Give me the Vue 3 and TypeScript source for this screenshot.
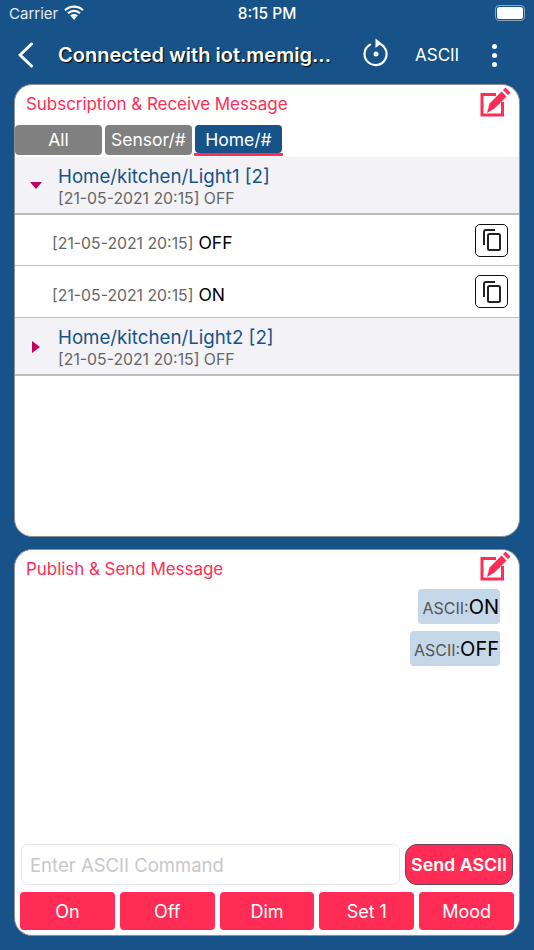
<script setup lang="ts">
interface Message {
  time: string
  value: string
}

const tabs = ['All', 'Sensor/#', 'Home/#']
const messages: Message[] = [
  { time: '[21-05-2021 20:15]', value: 'OFF' },
  { time: '[21-05-2021 20:15]', value: 'ON' },
]
const sent = ['ON', 'OFF']
const quick = ['On', 'Off', 'Dim', 'Set 1', 'Mood']
</script>

<template>
  <div class="screen">
    <div class="status">
      <div class="status-left">
        <span>Carrier</span>
        <svg width="20" height="15" viewBox="0 0 20 15">
          <path d="M1 5.200a13 13 0 0 1 18 0M4 8.300a8.800 8.800 0 0 1 12 0M6.900 11.200a4.600 4.600 0 0 1 6.200 0" fill="none" stroke="#fff" stroke-width="2.200" />
          <path d="M10 15l-2.400-2.700a3.400 3.400 0 0 1 4.800 0z" fill="#fff" />
        </svg>
      </div>
      <span class="clock">8:15 PM</span>
      <div class="battery"><i></i></div>
    </div>

    <nav class="navbar">
      <svg class="back" width="17" height="26" viewBox="0 0 17 26">
        <path d="M14.500 2L3 13l11.500 11" fill="none" stroke="#fff" stroke-width="3" stroke-linecap="round" stroke-linejoin="round" />
      </svg>
      <div class="nav-title">Connected with iot.memig...</div>
      <svg class="refresh" width="26" height="30" viewBox="0 0 26 30">
        <path d="M7 7.600A11 11 0 1 0 14 6.200" fill="none" stroke="#fff" stroke-width="2.200" stroke-linecap="round" />
        <path d="M12.500 1.500L18.500 6.200l-6 4.800z" fill="#fff" />
        <circle cx="13" cy="17" r="2.500" fill="#fff" />
      </svg>
      <span class="nav-mode">ASCII</span>
      <div class="dots"><i></i><i></i><i></i></div>
    </nav>

    <section class="card card-sub">
      <header class="card-head">
        <h2>Subscription &amp; Receive Message</h2>
        <svg class="edit" width="32" height="32" viewBox="0 0 32 32">
          <path d="M17 5.500H3V26H23.500V13" fill="none" stroke="#ff2d55" stroke-width="3" />
          <path d="M26.500 -1.500L31.500 3.500 29 6 24 1zM22.500 2.500L27.500 7.500 15.500 19.500 8 24 10.500 14.500z" fill="#ff2d55" />
        </svg>
      </header>
      <div class="tabs">
        <button v-for="(tab, i) in tabs" :key="tab" class="tab" :class="{ active: i === 2 }">{{ tab }}</button>
      </div>

      <div class="group">
        <span class="caret down"></span>
        <div>
          <div class="topic">Home/kitchen/Light1 [2]</div>
          <div class="last">[21-05-2021 20:15] OFF</div>
        </div>
      </div>
      <div v-for="m in messages" :key="m.value" class="row">
        <span class="time">{{ m.time }}</span>
        <span class="value">{{ m.value }}</span>
        <button class="copy">
          <svg width="20" height="22" viewBox="0 0 20 22" fill="none" stroke="#222" stroke-width="2">
            <path d="M2 16V3a2 2 0 0 1 2-2h9" />
            <rect x="6" y="5" width="12" height="16" rx="1.500" />
          </svg>
        </button>
      </div>
      <div class="group">
        <span class="caret right"></span>
        <div>
          <div class="topic">Home/kitchen/Light2 [2]</div>
          <div class="last">[21-05-2021 20:15] OFF</div>
        </div>
      </div>
    </section>

    <section class="card card-pub">
      <header class="card-head pub-head">
        <h2>Publish &amp; Send Message</h2>
        <svg class="edit" width="32" height="32" viewBox="0 0 32 32">
          <path d="M17 5.500H3V26H23.500V13" fill="none" stroke="#ff2d55" stroke-width="3" />
          <path d="M26.500 -1.500L31.500 3.500 29 6 24 1zM22.500 2.500L27.500 7.500 15.500 19.500 8 24 10.500 14.500z" fill="#ff2d55" />
        </svg>
      </header>
      <div class="bubbles">
        <div v-for="s in sent" :key="s" class="bubble"><span>ASCII:</span>{{ s }}</div>
      </div>
      <div class="composer">
        <div class="input">Enter ASCII Command</div>
        <button class="send">Send ASCII</button>
      </div>
      <div class="quick">
        <button v-for="q in quick" :key="q">{{ q }}</button>
      </div>
    </section>
  </div>
</template>

<style>
body {
  margin: 0;
  background: #175389;
}
</style>

<style scoped>
.screen {
  width: 534px;
  height: 950px;
  box-sizing: border-box;
  padding: 0 14px 14px;
  display: flex;
  flex-direction: column;
  background: #175389;
  color: #fff;
  font-family: Inter, "Liberation Sans", sans-serif;
  overflow: hidden;
}

.status {
  height: 28px;
  margin: 0 -14px;
  padding: 0 9px 2px;
  box-sizing: border-box;
  display: flex;
  align-items: center;
  justify-content: space-between;
  font-size: 15px;
  position: relative;
}
.status-left {
  display: flex;
  align-items: center;
  gap: 6px;
  color: #e4ebf2;
}
.status-left svg {
  margin-top: -1px;
}
.clock {
  position: absolute;
  left: 0;
  right: 0;
  text-align: center;
  font-weight: 500;
  font-size: 15.500px;
}
.battery {
  width: 26px;
  height: 12px;
  border: 1px solid #8aa7c4;
  border-radius: 4px;
  padding: 1px;
  box-sizing: content-box;
  display: flex;
}
.battery i {
  flex: 1;
  background: #fff;
  border-radius: 2.500px;
}

.navbar {
  height: 56px;
  display: flex;
  align-items: center;
  margin: 0 -14px;
  padding-left: 17px;
}
.back {
  margin-top: -3px;
}
.nav-title {
  margin-left: 24px;
  width: 291px;
  font-size: 20px;
  font-weight: 600;
  white-space: nowrap;
  text-shadow: 1px 1px 1px #000;
  margin-top: -2px;
}
.refresh {
  margin-left: 14px;
  margin-top: -8px;
}
.nav-mode {
  margin-left: 26px;
  margin-top: -2px;
  font-size: 17px;
}
.dots {
  margin-left: 33px;
  margin-top: -2px;
  display: flex;
  flex-direction: column;
  gap: 4px;
}
.dots i {
  width: 5px;
  height: 5px;
  background: #fff;
  border-radius: 50%;
}

.card {
  background: #fff;
  border: 1px solid #8f8f8f;
  border-radius: 18px;
  box-sizing: border-box;
  overflow: hidden;
  display: flex;
  flex-direction: column;
}
.card-sub {
  height: 453px;
}
.card-pub {
  height: 387px;
  margin-top: 12px;
}
.card-head {
  height: 40px;
  flex: none;
  display: flex;
  align-items: center;
  justify-content: space-between;
  padding: 0 8px 0 11px;
}
.card-head h2 {
  margin: -3px 0 0;
  font-size: 17px;
  font-weight: 400;
  color: #ff2d55;
  letter-spacing: -0.050px;
}
.edit {
  overflow: visible;
}

.tabs {
  display: flex;
  gap: 3px;
  height: 32px;
  flex: none;
}
.tab {
  position: relative;
  width: 87px;
  height: 30px;
  padding: 0 0 2px;
  border: 0;
  border-radius: 4px;
  background: #808080;
  color: #fff;
  font: inherit;
  font-size: 17.500px;
}
.tab.active {
  height: 28px;
  padding: 0;
  background: #175389;
}
.tab.active::after {
  content: "";
  position: absolute;
  left: -1px;
  right: -1px;
  bottom: -3px;
  height: 3px;
  border-radius: 1px;
  background: #ff2d55;
}

.group {
  height: 58px;
  flex: none;
  box-sizing: border-box;
  padding-top: 3px;
  background: #f2f2f7;
  border-bottom: 2px solid #bdbdbd;
  display: flex;
  align-items: center;
}
.caret {
  width: 0;
  height: 0;
  flex: none;
}
.caret.down {
  margin: -2px 16px 0 15px;
  border-left: 6px solid transparent;
  border-right: 6px solid transparent;
  border-top: 7px solid #c4005f;
}
.caret.right {
  margin: -2px 18px 0 17px;
  border-top: 6.500px solid transparent;
  border-bottom: 6.500px solid transparent;
  border-left: 8px solid #c4005f;
}
.topic {
  font-size: 18.700px;
  color: #175389;
  line-height: 24px;
}
.last {
  font-size: 15.800px;
  color: #666;
  line-height: 20px;
}

.row {
  height: 52px;
  flex: none;
  box-sizing: border-box;
  border-bottom: 1px solid #bdbdbd;
  display: flex;
  align-items: center;
  padding: 0 11px 0 37px;
}
.group + .row {
  height: 51px;
}
.time {
  font-size: 15.800px;
  color: #666;
  margin-right: 5px;
  margin-top: 7px;
}
.value {
  font-size: 17.500px;
  color: #000;
  margin-top: 5px;
}
.copy {
  margin-left: auto;
  width: 33px;
  height: 33px;
  border: 1.500px solid #111;
  border-radius: 5px;
  background: #fff;
  padding: 0;
  display: flex;
  align-items: center;
  justify-content: center;
}

.pub-head {
  height: 38px;
}
.pub-head h2 {
  margin-top: -1px;
}
.bubbles {
  flex: 1;
  display: flex;
  flex-direction: column;
  align-items: flex-end;
  gap: 7px;
  padding: 1px 19px 0 0;
}
.bubble {
  height: 35px;
  padding: 0 1px 0 4px;
  background: #c5d8e9;
  border-radius: 4px;
  color: #000;
  font-size: 20px;
  display: flex;
  align-items: center;
}
.bubble span {
  font-size: 16px;
  color: #555;
  margin-top: 3px;
}

.composer {
  display: flex;
  gap: 5px;
  padding: 0 6px;
  flex: none;
}
.input {
  flex: 1;
  height: 41px;
  box-sizing: border-box;
  border: 1px solid #e8e8e8;
  border-radius: 7px;
  padding-left: 8px;
  display: flex;
  align-items: center;
  font-size: 18.500px;
  color: #c7c7cd;
}
.send {
  width: 108px;
  height: 41px;
  border: 1px solid #66485a;
  border-radius: 12px;
  background: #ff2d55;
  color: #fff;
  font: inherit;
  font-size: 17.800px;
  font-weight: 600;
  padding: 0;
  white-space: nowrap;
}
.quick {
  display: flex;
  gap: 5px;
  padding: 7px 5px 5px;
  flex: none;
}
.quick button {
  flex: 1;
  height: 38px;
  border: 0;
  border-radius: 4px;
  background: #ff2d55;
  color: #fff;
  font: inherit;
  font-size: 18px;
  padding: 0;
}
</style>
